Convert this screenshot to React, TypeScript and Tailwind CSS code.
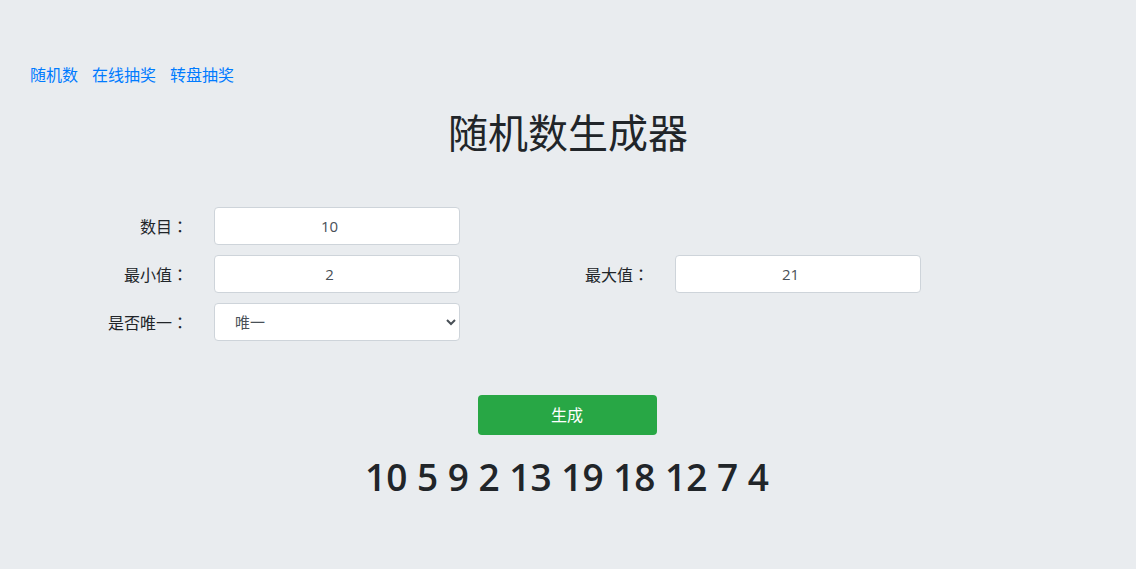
import React from "react";

const font = { fontFamily: '"Open Sans", "Noto Sans CJK SC", sans-serif' };

function Label({ text }: { text: string }) {
  return (
    <div className="w-[188px] text-right text-[16px] text-[#212529]">
      {text}
      <span style={{ fontFamily: '"Noto Sans CJK TC", sans-serif' }}>：</span>
    </div>
  );
}

function Field({ label, value }: { label: string; value: string }) {
  return (
    <div className="flex items-center">
      <Label text={label} />
      <div className="w-[26px]" />
      <input
        readOnly
        value={value}
        className="w-[246px] h-[38px] bg-white border border-[#ced4da] rounded-[4px] pl-[12px] pr-[27px] text-center text-[15px] text-[#495057] outline-none"
      />
    </div>
  );
}

export default function App() {
  return (
    <div className="min-h-[569px] bg-[#e9ecef] flex flex-col" style={font}>
      <nav className="flex gap-[14px] pl-[30px] pt-[63px] text-[16px] leading-[24px] text-[#007bff]">
        <a>随机数</a>
        <a>在线抽奖</a>
        <a>转盘抽奖</a>
      </nav>
      <h1 className="mt-[22px] text-center text-[40px] leading-[48px] text-[#212529] font-normal">随机数生成器</h1>
      <div className="mt-[50px] flex flex-col gap-[10px]">
        <Field label="数目" value="10" />
        <div className="flex">
          <Field label="最小值" value="2" />
          <div className="w-[1px]" />
          <Field label="最大值" value="21" />
        </div>
        <div className="flex items-center">
          <Label text="是否唯一" />
          <div className="w-[26px]" />
          <select className="w-[246px] h-[38px] bg-white border border-[#ced4da] rounded-[4px] pl-[16px] pr-[6px] text-[15px] text-[#495057] outline-none">
            <option>唯一</option>
            <option>不唯一</option>
          </select>
        </div>
      </div>
      <div className="mt-[54px] flex justify-center">
        <button className="w-[179px] h-[40px] -ml-[2px] bg-[#28a745] rounded-[4px] text-white text-[16px]">生成</button>
      </div>
      <div className="mt-[18px] -ml-[2px] text-center text-[37px] leading-[48px] font-semibold text-[#212529]">
        10 5 9 2 13 19 18 12 7 4
      </div>
    </div>
  );
}
